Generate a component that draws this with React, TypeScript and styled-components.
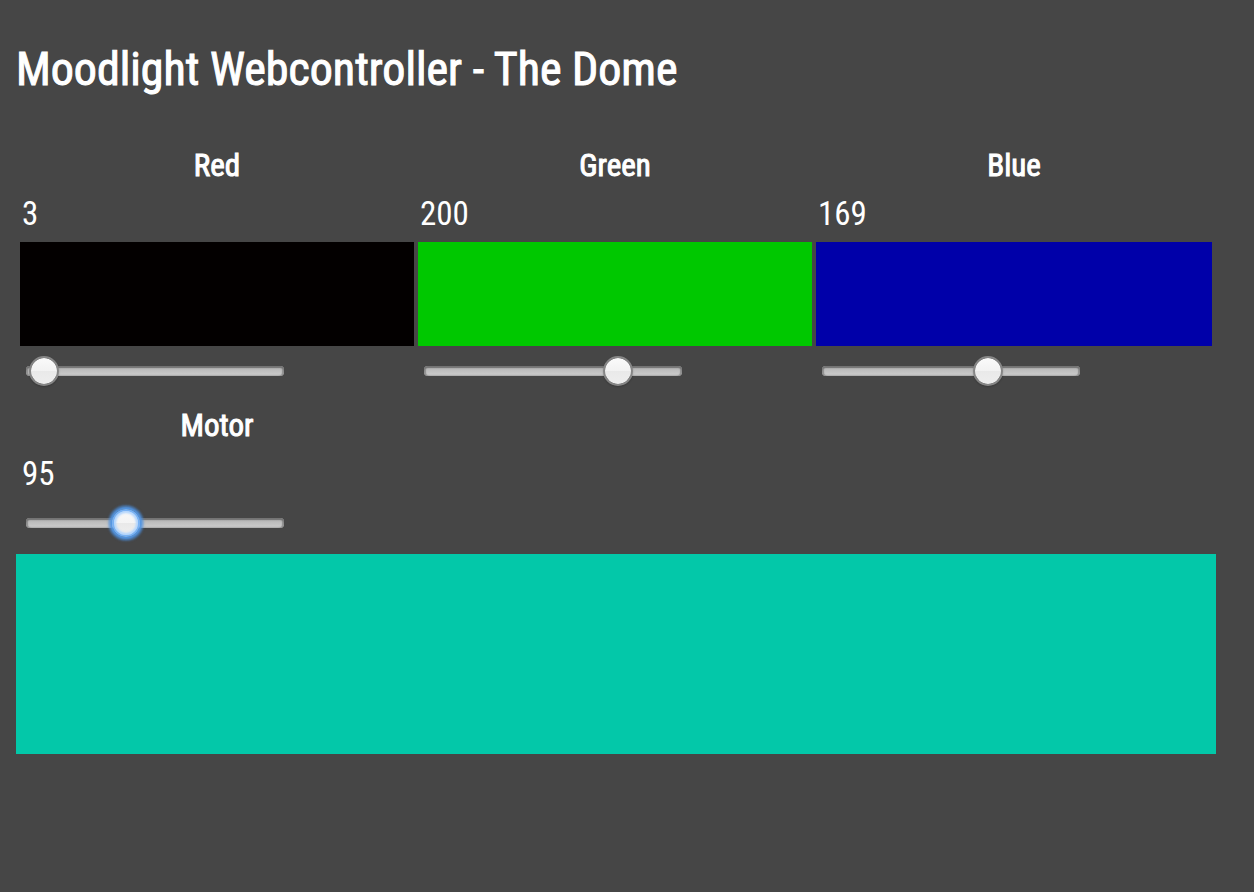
import React, { useState } from "react";
import styled, { createGlobalStyle, css } from "styled-components";

const GlobalStyle = createGlobalStyle`
  * { box-sizing: border-box; }
  body {
    margin: 0;
    background: #464646;
    color: #fff;
    font-family: "Roboto Condensed", "Liberation Sans Narrow", "DejaVu Sans Condensed", sans-serif;
  }
`;

const Page = styled.main`
  max-width: 1232px;
  padding: 39px 16px 16px;
`;

const strongText = css`
  font-weight: 400;
  -webkit-text-stroke: 1px currentColor;
`;

const Title = styled.h1`
  margin: 0 0 43px;
  font-size: 46px;
  line-height: 60px;
  ${strongText}
`;

const Channels = styled.div`
  display: grid;
  grid-template-columns: 394fr 394fr 396fr;
  gap: 16px 4px;
  padding: 0 4px;
  margin-bottom: 16px;
`;

const Channel = styled.section`
  display: flex;
  flex-direction: column;
`;

const ChannelLabel = styled.label`
  text-align: center;
  font-size: 31px;
  line-height: 48px;
  ${strongText}
`;

const ChannelValue = styled.output`
  padding-left: 2px;
  font-size: 33px;
  line-height: 48px;
`;

const Swatch = styled.div<{ $color: string }>`
  height: 104px;
  margin-top: 4px;
  background: ${(p) => p.$color};
`;

const plainThumb = css`
  border: 2px solid #868686;
  background: linear-gradient(#fafafa 0%, #f2f2f2 50%, #e9e9e9 51%, #eeeeee 100%);
  background-clip: padding-box;
  box-shadow: 0 1px 2px rgba(0, 0, 0, 0.2);
`;

const activeThumb = css`
  border: 2px solid #78b2f4;
  background: linear-gradient(#f8f8f8 0%, #f4f4f4 50%, #e9e9e9 51%, #eeeeee 100%);
  box-shadow: inset 0 0 2px 2px #b4d6fd, 0 0 2px 2px #5496e2, 0 0 2px 4px rgba(74, 144, 226, 0.5);
`;

const Slider = styled.input<{ $active?: boolean }>`
  appearance: none;
  width: 258px;
  max-width: 100%;
  height: 30px;
  margin: 10px 0 0 6px;
  background: transparent;
  outline: none;

  &::-webkit-slider-runnable-track {
    height: 10px;
    border-radius: 4px;
    background: linear-gradient(#a6a6a6 0%, #bdbdbd 40%, #c8c8c8 80%, #b4b4b4 100%);
    box-shadow: inset 0 2px 1px #747474, inset 2px 0 1px #919191, inset -2px 0 1px #919191;
  }

  &::-webkit-slider-thumb {
    appearance: none;
    width: ${(p) => (p.$active ? 28 : 30)}px;
    height: ${(p) => (p.$active ? 28 : 30)}px;
    margin-top: ${(p) => (p.$active ? -9 : -10)}px;
    border-radius: 50%;
    ${(p) => (p.$active ? activeThumb : plainThumb)}
  }
`;

const Preview = styled.div<{ $color: string }>`
  height: 200px;
  background: ${(p) => p.$color};
`;

type Name = "red" | "green" | "blue" | "motor";

const channels: { name: Name; label: string; swatch?: (v: number) => string }[] = [
  { name: "red", label: "Red", swatch: (v) => `rgb(${v}, 0, 0)` },
  { name: "green", label: "Green", swatch: (v) => `rgb(0, ${v}, 0)` },
  { name: "blue", label: "Blue", swatch: (v) => `rgb(0, 0, ${v})` },
  { name: "motor", label: "Motor" },
];

export default function App() {
  const [values, setValues] = useState<Record<Name, number>>({
    red: 3,
    green: 200,
    blue: 169,
    motor: 95,
  });
  const [active, setActive] = useState<Name>("motor");

  return (
    <>
      <GlobalStyle />
      <Page>
        <Title>Moodlight Webcontroller - The Dome</Title>
        <Channels>
          {channels.map(({ name, label, swatch }) => (
            <Channel key={name}>
              <ChannelLabel htmlFor={name}>{label}</ChannelLabel>
              <ChannelValue htmlFor={name}>{values[name]}</ChannelValue>
              {swatch && <Swatch $color={swatch(values[name])} />}
              <Slider
                id={name}
                type="range"
                min={0}
                max={255}
                value={values[name]}
                $active={active === name}
                onFocus={() => setActive(name)}
                onChange={(e) => setValues({ ...values, [name]: Number(e.target.value) })}
              />
            </Channel>
          ))}
        </Channels>
        <Preview $color={`rgb(${values.red}, ${values.green}, ${values.blue})`} />
      </Page>
    </>
  );
}
